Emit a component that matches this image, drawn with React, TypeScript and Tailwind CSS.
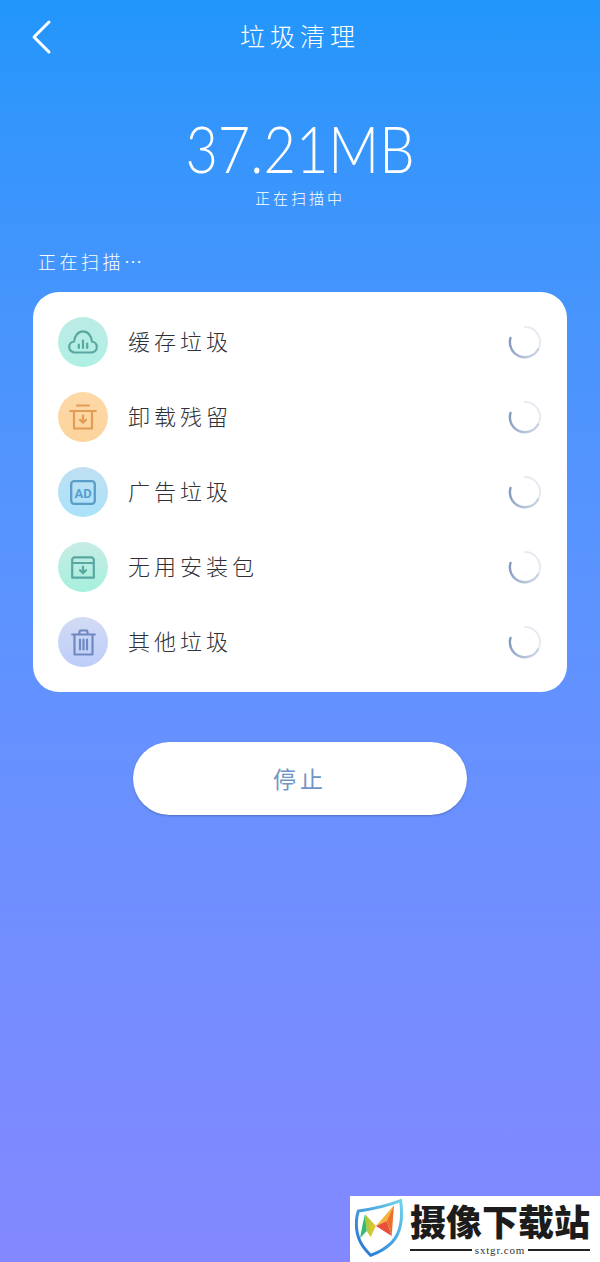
import { ReactNode } from 'react'

const cjk = { fontFamily: '"Noto Sans CJK SC", sans-serif' }

function CloudIcon() {
  return (
    <svg width="30" height="24" viewBox="0 0 30 24" fill="none" stroke="#58a8a1" strokeWidth="2.200" strokeLinecap="round" strokeLinejoin="round">
      <path d="M7 22.500c-3.300 0-5.800-2.400-5.800-5.500 0-2.900 2.100-5.200 4.900-5.500C6.500 5.700 10.300 1.300 15 1.300s8.500 4.400 8.900 10.200c2.800.3 4.900 2.600 4.900 5.500 0 3.100-2.500 5.500-5.800 5.500H7z" />
      <path d="M10.800 14.500v3.500M15 10.500v7.500M19.200 13.500v4.500" />
    </svg>
  )
}

function UninstallIcon() {
  return (
    <svg width="28" height="26" viewBox="0 0 28 26" fill="none" stroke="#e29c55" strokeWidth="2.200" strokeLinecap="round" strokeLinejoin="round">
      <path d="M8 1.500h12M1.200 7h25.600M5 7v17.500h18V7" />
      <path d="M14 11.500v7M11 15.800l3 2.800 3-2.800" />
    </svg>
  )
}

function AdIcon() {
  return (
    <svg width="26" height="25" viewBox="0 0 26 25" fill="none">
      <rect x="1.200" y="1.200" width="23.600" height="22.600" rx="3" stroke="#5a9dc9" strokeWidth="2.300" />
      <text x="13" y="17.500" textAnchor="middle" fontSize="13" fontWeight="700" fill="#5a9dc9" fontFamily="Roboto, sans-serif">AD</text>
    </svg>
  )
}

function PackageIcon() {
  return (
    <svg width="24" height="23" viewBox="0 0 24 23" fill="none" stroke="#58a8a1" strokeWidth="2.200" strokeLinecap="round" strokeLinejoin="round">
      <path d="M3 1.300h18l1.800 2v18.400H1.200V3.300L3 1.300zM1.200 7h21.600" />
      <path d="M12 10.500v6.500M9 14.200l3 3 3-3" />
    </svg>
  )
}

function TrashIcon() {
  return (
    <svg width="25" height="27" viewBox="0 0 25 27" fill="none" stroke="#7189c2" strokeWidth="2.200" strokeLinecap="round" strokeLinejoin="round">
      <path d="M1.200 5.500h22.600M8 5.500l1-4h7l1 4M3.500 5.500v20h18v-20" />
      <path d="M9 10.500v10M12.500 10.500v10M16 10.500v10" />
    </svg>
  )
}

function Spinner() {
  return (
    <svg width="34" height="34" viewBox="0 0 34 34" fill="none">
      <defs>
        <linearGradient id="spin" x1="0" y1="0" x2="1" y2="0.300">
          <stop offset="0" stopColor="#8097bd" />
          <stop offset="1" stopColor="#c5d1e3" />
        </linearGradient>
      </defs>
      <path d="M17 2a15 15 0 0 1 13 22.500" stroke="#e6eaf1" strokeWidth="2" strokeLinecap="round" />
      <path d="M2.500 13a15 15 0 0 0 27.500 11.500" stroke="url(#spin)" strokeWidth="2.400" strokeLinecap="round" />
    </svg>
  )
}

function ShieldLogo() {
  return (
    <svg className="shrink-0" width="60" height="66" viewBox="0 0 180 198">
      <defs>
        <linearGradient id="shieldStroke" x1="1" y1="0" x2="0" y2="1">
          <stop offset="0" stopColor="#6fd3ea" />
          <stop offset="1" stopColor="#1f6fd6" />
        </linearGradient>
        <linearGradient id="leftFace" x1="0" y1="0" x2="1" y2="0.300">
          <stop offset="0" stopColor="#8fcb3c" />
          <stop offset="1" stopColor="#f0c432" />
        </linearGradient>
      </defs>
      <path d="M25 45C62 40 110 30 152 14c6 46 3 96-27 126-20 20-40 30-63 38C45 160 25 140 20 100c-2-20 0-40 5-55z" fill="#ffffff" stroke="url(#shieldStroke)" strokeWidth="9" />
      <path d="M45 55l33 35-16 34-12-19z" fill="url(#leftFace)" />
      <path d="M45 55l5 50-20 22 8-42z" fill="#35b96c" />
      <path d="M78 90l54-62-22 47z" fill="#f5b23a" />
      <path d="M132 28l-7 92-15-45z" fill="#ec6f2a" />
      <path d="M78 90l32-15 15 45z" fill="#e8503a" />
    </svg>
  )
}

const rows: { label: string; icon: ReactNode; tint: string }[] = [
  { label: '缓存垃圾', icon: <CloudIcon />, tint: 'from-[#bcebe6] to-[#aef0e4]' },
  { label: '卸载残留', icon: <UninstallIcon />, tint: 'from-[#fdd9a8] to-[#fcd39b]' },
  { label: '广告垃圾', icon: <AdIcon />, tint: 'from-[#c0dff2] to-[#a9e3fa]' },
  { label: '无用安装包', icon: <PackageIcon />, tint: 'from-[#c6ece6] to-[#a6f0dd]' },
  { label: '其他垃圾', icon: <TrashIcon />, tint: 'from-[#d2dbf4] to-[#bccdf9]' },
]

export default function App() {
  return (
    <div className="relative h-[1262px] w-[600px] overflow-hidden bg-gradient-to-b from-[#2196fb] via-[#5e93ff] to-[#8388ff]" style={cjk}>
      <header className="relative flex h-[72px] items-center justify-center">
        <button className="absolute left-[30px] top-[19px]">
          <svg width="24" height="36" viewBox="0 0 24 36" fill="none" stroke="#ffffff" strokeWidth="3" strokeLinecap="round" strokeLinejoin="round">
            <path d="M19 3L4 18l15 15" />
          </svg>
        </button>
        <h1 className="pb-[2px] text-[25px] font-light leading-none tracking-[5px] text-white">垃圾清理</h1>
      </header>

      <div className="mt-[44px] flex flex-col items-center text-white">
        <div className="origin-center scale-y-[1.15] text-[56px] font-light leading-[66px] font-['Lato',sans-serif]">37.21MB</div>
        <div className="mt-[6px] text-[15px] font-light leading-[20px] tracking-[3px]">正在扫描中</div>
      </div>

      <div className="ml-[38px] mt-[42px] text-[18px] font-light leading-[23px] tracking-[3.500px] text-white">正在扫描…</div>

      <section className="mx-[33px] mt-[19px] flex h-[400px] flex-col justify-center rounded-[26px] bg-white pl-[25px] pr-[25px]">
        {rows.map((row) => (
          <div key={row.label} className="flex h-[75px] items-center">
            <div className={`flex h-[50px] w-[50px] items-center justify-center rounded-full bg-gradient-to-b ${row.tint}`}>
              {row.icon}
            </div>
            <span className="ml-[20px] flex-1 pb-[3px] text-[22px] font-light tracking-[4px] text-[#2f3136]">{row.label}</span>
            <Spinner />
          </div>
        ))}
      </section>

      <div className="mt-[50px] flex justify-center">
        <button className="h-[73px] w-[334px] rounded-full bg-white text-[23px] font-normal tracking-[4px] text-[#6f94c6] shadow-[0_1px_2px_rgba(60,80,130,0.5)]">
          停止
        </button>
      </div>

      <div className="absolute bottom-0 right-0 flex h-[66px] w-[250px] bg-white">
        <ShieldLogo />
        <div className="flex w-[180px] flex-col items-center pt-[5px]">
          <div className="text-[36px] font-black leading-[38px] text-[#1c1c1c]">摄像下载站</div>
          <div className="mt-[4px] flex w-[180px] items-center gap-[3px]">
            <span className="h-[2px] flex-1 bg-[#222222]" />
            <span className="text-[11px] leading-[14px] tracking-[0.800px] text-[#333333] font-['Liberation_Serif',serif]">sxtgr.com</span>
            <span className="h-[2px] flex-1 bg-[#222222]" />
          </div>
        </div>
      </div>
    </div>
  )
}
